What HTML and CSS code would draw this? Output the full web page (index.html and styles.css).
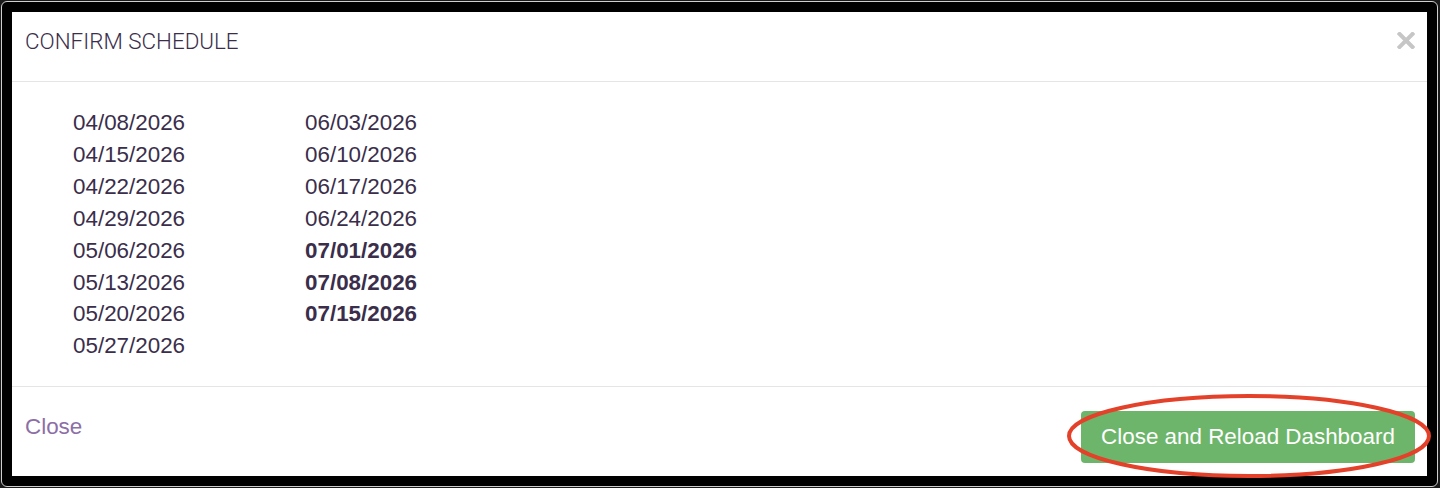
FILE: index.html
```html
<!DOCTYPE html>
<html>
<head>
<meta charset="utf-8">
<link rel="stylesheet" href="styles.css">
</head>
<body>
<div class="frame">
  <div class="modal">
    <div class="modal-header">
      <h4 class="modal-title">CONFIRM SCHEDULE</h4>
      <button class="close-x" aria-label="Close">
        <svg width="18" height="17" viewBox="0 0 18 17"><path d="M2.5 2 L15.5 15 M15.5 2 L2.5 15" stroke="#c6c6c6" stroke-width="4" stroke-linecap="square"/></svg>
      </button>
    </div>
    <div class="modal-body">
      <ul class="dates">
        <li>04/08/2026</li>
        <li>04/15/2026</li>
        <li>04/22/2026</li>
        <li>04/29/2026</li>
        <li>05/06/2026</li>
        <li>05/13/2026</li>
        <li>05/20/2026</li>
        <li>05/27/2026</li>
      </ul>
      <ul class="dates">
        <li>06/03/2026</li>
        <li>06/10/2026</li>
        <li>06/17/2026</li>
        <li>06/24/2026</li>
        <li class="new">07/01/2026</li>
        <li class="new">07/08/2026</li>
        <li class="new">07/15/2026</li>
      </ul>
    </div>
    <div class="modal-footer">
      <a class="link-close" href="#">Close</a>
      <div class="btn-wrap">
        <button class="btn-success">Close and Reload Dashboard</button>
        <svg class="annot" width="372" height="90" viewBox="0 0 372 90"><ellipse cx="185" cy="45" rx="180" ry="40" fill="none" stroke="#e4412b" stroke-width="4"/></svg>
      </div>
    </div>
  </div>
</div>
</body>
</html>
```
FILE: styles.css
```css
html, body {
  margin: 0;
  padding: 0;
  background: #1a1a1a;
  height: 488px;
  overflow: hidden;
}
body {
  padding: 1px 2px 0 1px;
  box-sizing: border-box;
}
.frame {
  height: 486px;
  box-sizing: border-box;
  border: 1px solid #cfcfcf;
  border-radius: 6px;
  background: #000;
  padding: 10px;
}
.modal {
  background: #fff;
  height: 464px;
  display: flex;
  flex-direction: column;
  font-family: "Liberation Sans", Arial, sans-serif;
  color: #3a2e4b;
}
.modal-header {
  height: 70px;
  box-sizing: border-box;
  border-bottom: 1px solid #e5e5e5;
  display: flex;
  justify-content: space-between;
  align-items: flex-start;
  padding: 17px 12px 0 13px;
  flex: none;
}
.modal-title {
  margin: 0;
  font-family: Roboto, "Liberation Sans", sans-serif;
  font-weight: 300;
  font-size: 22.4px;
  line-height: 24px;
  color: #3a2e4b;
}
.close-x {
  border: 0;
  background: none;
  padding: 0;
  margin-top: 3px;
  width: 18px;
  height: 17px;
  display: block;
}
.close-x svg { display: block; }
.modal-body {
  height: 305px;
  box-sizing: border-box;
  border-bottom: 1px solid #e5e5e5;
  padding: 25px 0 0 61px;
  display: flex;
  flex: none;
}
.dates {
  list-style: none;
  margin: 0;
  padding: 0;
  width: 232px;
  font-size: 22.4px;
  line-height: 31.9px;
}
.dates .new { font-weight: 700; }
.modal-footer {
  flex: 1;
  display: flex;
  justify-content: space-between;
  align-items: flex-start;
  padding: 24px 12px 0 13px;
}
.link-close {
  font-size: 22.4px;
  line-height: 32px;
  color: #8c6fa6;
  text-decoration: none;
}
.btn-wrap {
  position: relative;
  margin-top: 0;
}
.btn-success {
  display: block;
  height: 52px;
  width: 334px;
  border: 0;
  border-radius: 4px;
  background: #6db56a;
  color: #fff;
  font-family: "Liberation Sans", Arial, sans-serif;
  font-size: 22.4px;
  padding: 0;
  text-align: center;
}
.annot {
  position: absolute;
  left: -17px;
  top: -20px;
  pointer-events: none;
}
```
